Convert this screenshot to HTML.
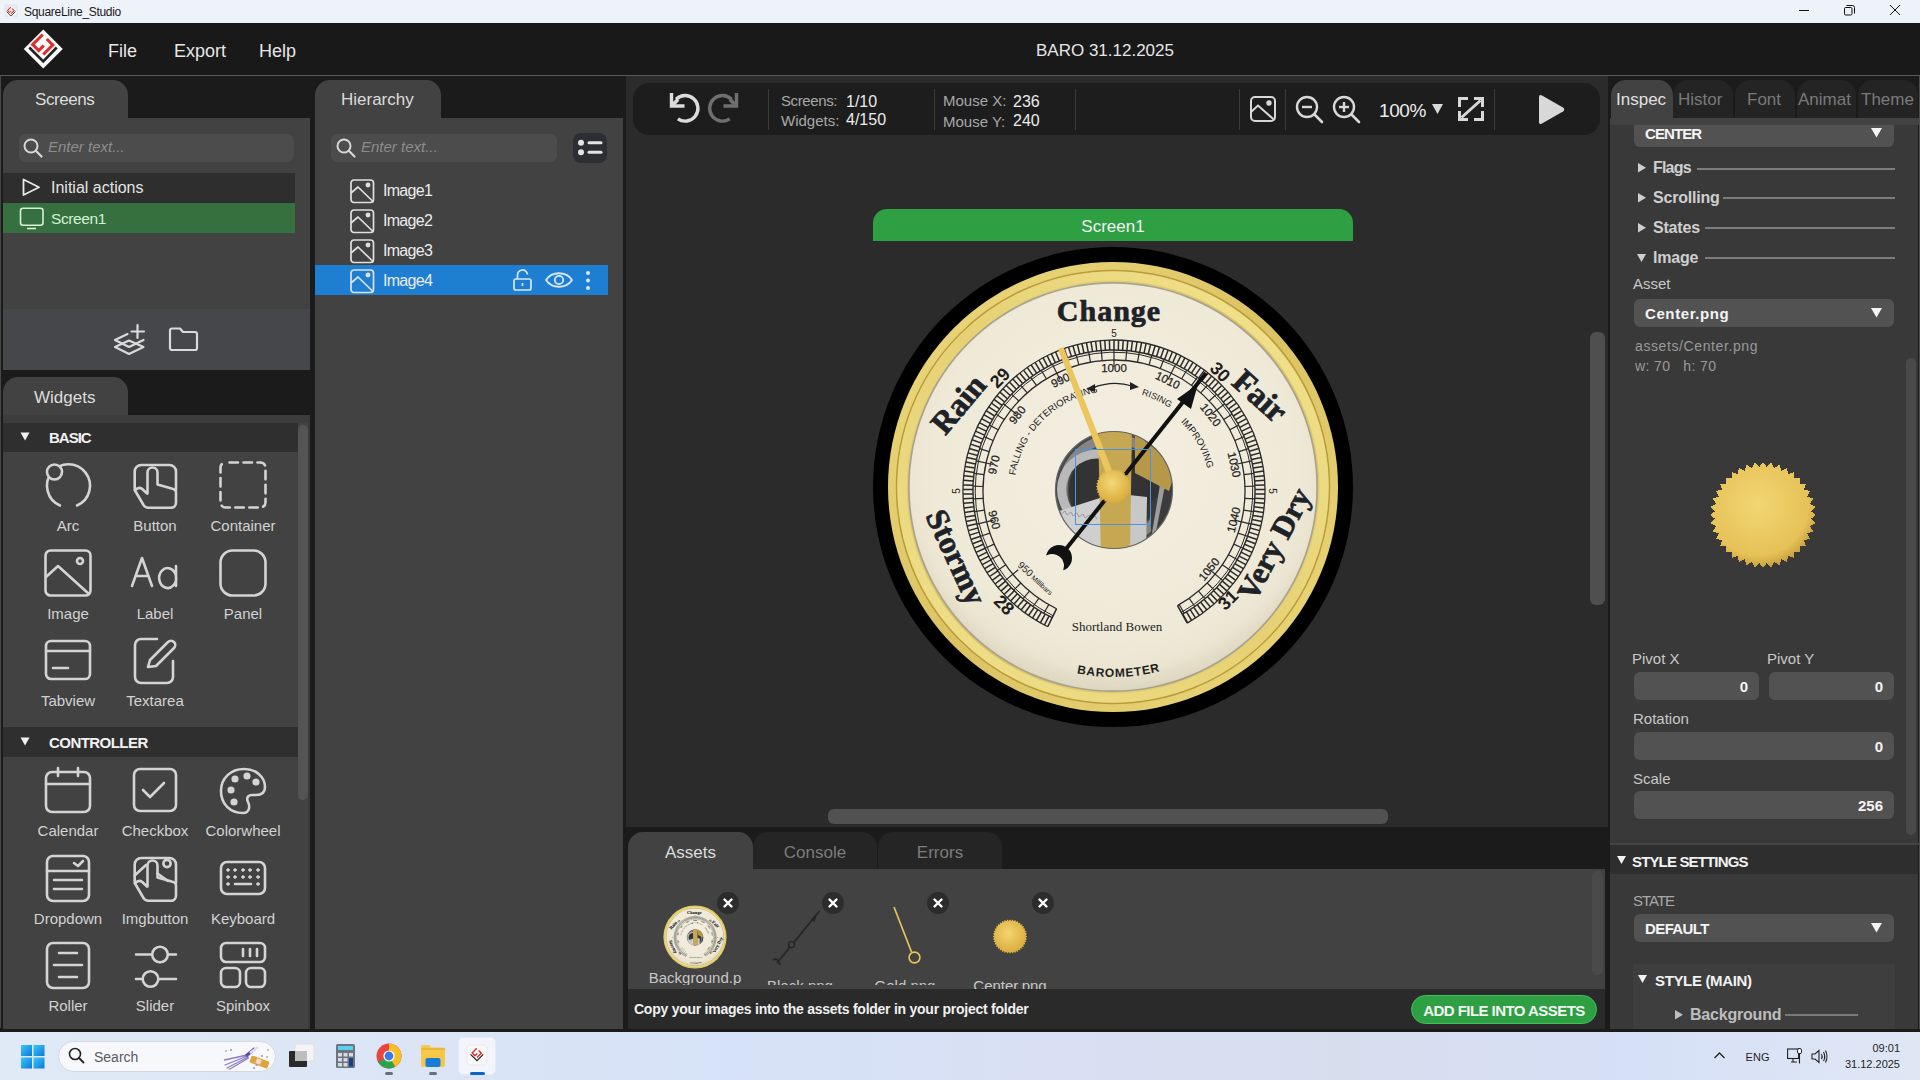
<!DOCTYPE html><html><head><meta charset="utf-8"><style>
*{margin:0;padding:0;box-sizing:border-box}
html,body{width:1920px;height:1080px;overflow:hidden;background:#1b1b1b;font-family:"Liberation Sans",sans-serif}
.ab{position:absolute}
.t{position:absolute;white-space:nowrap;line-height:1}
svg{position:absolute;overflow:visible}

</style></head><body>
<div class="ab" style="left:0px;top:0px;width:1920px;height:23px;background:#eef2f9;"></div>
<svg style="left:3px;top:3px;" width="16" height="16" viewBox="0 0 16 16"><rect x="1" y="1" width="14" height="14" rx="3" fill="#e4e8ef"/><use href="#logo" transform="translate(8,9) scale(0.33)"/></svg>
<div class="t" style="left:24px;top:5.84px;font-size:12px;color:#1a1a1a;letter-spacing:-0.3px">SquareLine_Studio</div>
<svg style="left:1799px;top:10px;" width="10" height="1" viewBox="0 0 10 1"><rect x="0" y="0" width="10" height="1" fill="#111"/></svg>
<svg style="left:1844px;top:5px;" width="11" height="11" viewBox="0 0 11 11"><rect x="0.5" y="2.5" width="7.5" height="7.5" rx="1.2" fill="none" stroke="#111" stroke-width="1"/><path d="M2.5 0.5 H8.5 A2 2 0 0 1 10.5 2.5 V8.5" fill="none" stroke="#111" stroke-width="1"/></svg>
<svg style="left:1890px;top:5px;" width="10" height="10" viewBox="0 0 10 10"><path d="M0 0 L10 10 M10 0 L0 10" stroke="#111" stroke-width="1"/></svg>
<div class="ab" style="left:0px;top:23px;width:1920px;height:52px;background:#191919;"></div>
<div class="ab" style="left:0px;top:75px;width:1920px;height:1px;background:#5a5a5a;"></div>
<svg style="left:23px;top:29px;" width="40" height="40" viewBox="0 0 40 40"><g transform="translate(20.25,20)"><g id="logo">
<path d="M0 -19.5 L19.5 0 L0 19.5 L-19.5 0 Z" fill="#fafafa"/>
<path d="M-14 -1.5 L0 12.5 L13.5 -1.5" fill="none" stroke="#222" stroke-width="2.6"/>
<path d="M-0.5 -14.5 L-10.5 -4.5 L-4.5 1.5 L0.5 -3.5" fill="none" stroke="#d92f2f" stroke-width="3.1"/>
<path d="M3.5 -10 L9.5 -4 L0 5.5" fill="none" stroke="#d92f2f" stroke-width="3.1"/>
</g></g></svg>
<div class="t" style="left:108px;top:41.76px;font-size:18px;color:#e6e6e6;">File</div>
<div class="t" style="left:174px;top:41.76px;font-size:18px;color:#e6e6e6;">Export</div>
<div class="t" style="left:259px;top:41.76px;font-size:18px;color:#e6e6e6;">Help</div>
<div class="t" style="left:1036px;top:41.61px;font-size:17px;color:#e6e6e6;">BARO 31.12.2025</div>
<div class="ab" style="left:0px;top:76px;width:1920px;height:955px;background:#1b1b1b;"></div>
<div class="ab" style="left:0px;top:76px;width:1px;height:952px;background:#474747;"></div>
<div class="ab" style="left:3px;top:80px;width:125px;height:40px;background:#424242;border-radius:15px 15px 0 0"></div>
<div class="t" style="left:35px;top:90.61px;font-size:17px;color:#dcdcdc;letter-spacing:-0.45px">Screens</div>
<div class="ab" style="left:3px;top:118px;width:307px;height:252px;background:#424242;"></div>
<div class="ab" style="left:19px;top:134px;width:275px;height:28px;background:#4c4c4c;border-radius:7px"></div>
<svg style="left:23px;top:138px;" width="24" height="24" viewBox="0 0 24 24"><circle cx="8" cy="8" r="6.5" fill="none" stroke="#d8d8d8" stroke-width="2"/><path d="M12.8 12.8 L18.5 18.5" stroke="#d8d8d8" stroke-width="2.2" stroke-linecap="round"/></svg>
<div class="t" style="left:48px;top:139.30px;font-size:15px;color:#8c8c8c;font-style:italic;">Enter text...</div>
<div class="ab" style="left:3px;top:173px;width:292px;height:30px;background:#2e2e2e;"></div>
<svg style="left:22px;top:178px;" width="20" height="20" viewBox="0 0 20 20"><path d="M1.5 1.5 L17 9.3 L1.5 17 Z" fill="none" stroke="#e8e8e8" stroke-width="1.8" stroke-linejoin="round"/></svg>
<div class="t" style="left:51px;top:180.46px;font-size:16px;color:#e4e4e4;">Initial actions</div>
<div class="ab" style="left:3px;top:203px;width:292px;height:30px;background:#37703f;"></div>
<svg style="left:19px;top:207px;" width="26" height="24" viewBox="0 0 26 24"><rect x="1.5" y="1.2" width="22.5" height="17" rx="2.5" fill="none" stroke="#d4f2d4" stroke-width="1.6"/><path d="M8 21.5 H17" stroke="#d4f2d4" stroke-width="1.6"/></svg>
<div class="t" style="left:51px;top:210.88px;font-size:15.5px;color:#d4f2d4;letter-spacing:-0.4px">Screen1</div>
<div class="ab" style="left:3px;top:309px;width:307px;height:61px;background:#46474a;"></div>
<svg style="left:112px;top:323px;" width="34" height="34" viewBox="0 0 34 34"><g fill="none" stroke="#dadada" stroke-width="2.2" stroke-linecap="round" stroke-linejoin="round">
<path d="M25.5 2 V15 M19.5 8.5 H32"/>
<path d="M15.5 11 L3 17 L17 24 L31.5 17"/>
<path d="M3 24 L17 31 L31.5 24 L17 17.5 Z"/>
</g></svg>
<svg style="left:168px;top:327px;" width="32" height="26" viewBox="0 0 32 26"><path d="M2 3 A2 2 0 0 1 4 1.5 H12 L15 5 H27 A2 2 0 0 1 29 7 V21 A2 2 0 0 1 27 23 H4 A2 2 0 0 1 2 21 Z" fill="none" stroke="#dadada" stroke-width="2.2" stroke-linejoin="round"/></svg>
<div class="ab" style="left:3px;top:377px;width:125px;height:40px;background:#424242;border-radius:15px 15px 0 0"></div>
<div class="t" style="left:34px;top:388.61px;font-size:17px;color:#dcdcdc;">Widgets</div>
<div class="ab" style="left:3px;top:415px;width:307px;height:614px;background:#424242;"></div>
<div class="ab" style="left:3px;top:415px;width:307px;height:8px;background:#3d3d3d;"></div>
<div class="ab" style="left:3px;top:423px;width:295px;height:29px;background:#2f2f2f;"></div>
<svg style="left:20px;top:432px;" width="10" height="9" viewBox="0 0 10 9"><path d="M0.5 0.5 H9.5 L5 8.5 Z" fill="#f0f0f0"/></svg>
<div class="t" style="left:49px;top:430.30px;font-size:15px;color:#f2f2f2;font-weight:bold;letter-spacing:-1px">BASIC</div>
<div class="ab" style="left:3px;top:727px;width:295px;height:30px;background:#2f2f2f;"></div>
<svg style="left:20px;top:737px;" width="10" height="9" viewBox="0 0 10 9"><path d="M0.5 0.5 H9.5 L5 8.5 Z" fill="#f0f0f0"/></svg>
<div class="t" style="left:49px;top:735.30px;font-size:15px;color:#f2f2f2;font-weight:bold;letter-spacing:-0.55px">CONTROLLER</div>
<div class="ab" style="left:298px;top:425px;width:10px;height:375px;background:#545454;border-radius:5px"></div>
<div class="ab" style="left:308px;top:415px;width:2px;height:614px;background:#3a3a3a;"></div>
<div class="t" style="left:8px;top:518.30px;font-size:15px;color:#d2d2d2;width:120px;text-align:center;">Arc</div>
<div class="t" style="left:95px;top:518.30px;font-size:15px;color:#d2d2d2;width:120px;text-align:center;">Button</div>
<div class="t" style="left:183px;top:518.30px;font-size:15px;color:#d2d2d2;width:120px;text-align:center;">Container</div>
<div class="t" style="left:8px;top:606.30px;font-size:15px;color:#d2d2d2;width:120px;text-align:center;">Image</div>
<div class="t" style="left:95px;top:606.30px;font-size:15px;color:#d2d2d2;width:120px;text-align:center;">Label</div>
<div class="t" style="left:183px;top:606.30px;font-size:15px;color:#d2d2d2;width:120px;text-align:center;">Panel</div>
<div class="t" style="left:8px;top:693.30px;font-size:15px;color:#d2d2d2;width:120px;text-align:center;">Tabview</div>
<div class="t" style="left:95px;top:693.30px;font-size:15px;color:#d2d2d2;width:120px;text-align:center;">Textarea</div>
<div class="t" style="left:8px;top:823.30px;font-size:15px;color:#d2d2d2;width:120px;text-align:center;">Calendar</div>
<div class="t" style="left:95px;top:823.30px;font-size:15px;color:#d2d2d2;width:120px;text-align:center;">Checkbox</div>
<div class="t" style="left:183px;top:823.30px;font-size:15px;color:#d2d2d2;width:120px;text-align:center;">Colorwheel</div>
<div class="t" style="left:8px;top:911.30px;font-size:15px;color:#d2d2d2;width:120px;text-align:center;">Dropdown</div>
<div class="t" style="left:95px;top:911.30px;font-size:15px;color:#d2d2d2;width:120px;text-align:center;">Imgbutton</div>
<div class="t" style="left:183px;top:911.30px;font-size:15px;color:#d2d2d2;width:120px;text-align:center;">Keyboard</div>
<div class="t" style="left:8px;top:998.30px;font-size:15px;color:#d2d2d2;width:120px;text-align:center;">Roller</div>
<div class="t" style="left:95px;top:998.30px;font-size:15px;color:#d2d2d2;width:120px;text-align:center;">Slider</div>
<div class="t" style="left:183px;top:998.30px;font-size:15px;color:#d2d2d2;width:120px;text-align:center;">Spinbox</div>
<svg style="left:44px;top:461px;" width="48" height="48" viewBox="0 0 48 48"><g fill="none" stroke="#d4d4d4" stroke-width="2.6" stroke-linecap="round" stroke-linejoin="round"><path d="M16 44.5 A21.5 21.5 0 1 1 33 44.5"/><circle cx="10.5" cy="11" r="7.5" fill="#424242"/></g></svg>
<svg style="left:131px;top:461px;" width="48" height="48" viewBox="0 0 48 48"><g fill="none" stroke="#d4d4d4" stroke-width="2.6" stroke-linecap="round" stroke-linejoin="round"><path d="M3.7 29 V10.5 A6.5 6.5 0 0 1 10.2 4 H38.5 A6.5 6.5 0 0 1 45 10.5 V29"/><path d="M16 32.5 L11 27.8 Q7.5 25.5 4 29.5 L12.5 44 Q14 46.8 17.5 46.8 H40 A5 5 0 0 0 45 41.8 V31.5 Q45 28.5 41.5 27.8 L26.5 23.5 V11.5 A5 5 0 0 0 16.5 11.5 V32.5"/></g></svg>
<svg style="left:219px;top:461px;" width="48" height="48" viewBox="0 0 48 48"><g fill="none" stroke="#d4d4d4" stroke-width="2.6" stroke-linecap="round" stroke-linejoin="round"><rect x="1.5" y="1.5" width="45" height="45" rx="5" stroke-dasharray="8.5 5.5" stroke-dashoffset="-4"/></g></svg>
<svg style="left:44px;top:549px;" width="48" height="48" viewBox="0 0 48 48"><g fill="none" stroke="#d4d4d4" stroke-width="2.6" stroke-linecap="round" stroke-linejoin="round"><rect x="1.5" y="1.5" width="45" height="45" rx="5"/><path d="M2 28 L14 17 L45 45"/><circle cx="36" cy="12" r="3"/></g></svg>
<svg style="left:131px;top:549px;" width="48" height="48" viewBox="0 0 48 48"><g fill="none" stroke="#d4d4d4" stroke-width="2.6" stroke-linecap="round" stroke-linejoin="round"><path d="M1 37 L11 9 L21 37 M5 27 H17"/><path d="M45 17 V37 M45 27 A8.5 10 0 1 1 44.9 26.5"/></g></svg>
<svg style="left:219px;top:549px;" width="48" height="48" viewBox="0 0 48 48"><g fill="none" stroke="#d4d4d4" stroke-width="2.6" stroke-linecap="round" stroke-linejoin="round"><rect x="1.5" y="1.5" width="45" height="45" rx="12"/></g></svg>
<svg style="left:44px;top:636px;" width="48" height="48" viewBox="0 0 48 48"><g fill="none" stroke="#d4d4d4" stroke-width="2.6" stroke-linecap="round" stroke-linejoin="round"><rect x="2" y="5" width="44" height="38" rx="5"/><path d="M2 15 H46 M9 32 H24"/></g></svg>
<svg style="left:131px;top:636px;" width="48" height="48" viewBox="0 0 48 48"><g fill="none" stroke="#d4d4d4" stroke-width="2.6" stroke-linecap="round" stroke-linejoin="round"><path d="M26 3 H10 A6 6 0 0 0 4 9 V41 A6 6 0 0 0 10 47 H36 A6 6 0 0 0 42 41 V25"/><path d="M17 31 L19 24 L37 6 A4 4 0 0 1 43 12 L25 30 Z"/></g></svg>
<svg style="left:44px;top:767px;" width="48" height="48" viewBox="0 0 48 48"><g fill="none" stroke="#d4d4d4" stroke-width="2.6" stroke-linecap="round" stroke-linejoin="round"><rect x="2" y="5" width="44" height="40" rx="6"/><path d="M2 17 H46 M14 1 V9 M34 1 V9"/></g></svg>
<svg style="left:131px;top:767px;" width="48" height="48" viewBox="0 0 48 48"><g fill="none" stroke="#d4d4d4" stroke-width="2.6" stroke-linecap="round" stroke-linejoin="round"><rect x="3" y="2" width="42" height="42" rx="6"/><path d="M12 23 L19 30 L33 16"/></g></svg>
<svg style="left:219px;top:767px;" width="48" height="48" viewBox="0 0 48 48"><g fill="none" stroke="#d4d4d4" stroke-width="2.6" stroke-linecap="round" stroke-linejoin="round"><path d="M24 46 C11 46 2 37 2 24 C2 11 12 2 25 2 C37 2 46 10 46 20 C46 26 42 28 37 28 H33 C29 28 27 31 29 35 C31 39 31 46 24 46 Z"/><circle cx="12" cy="23" r="2.3" fill="#d4d4d4"/><circle cx="16" cy="12" r="2.3" fill="#d4d4d4"/><circle cx="28" cy="9" r="2.3" fill="#d4d4d4"/><circle cx="37" cy="15" r="2.3" fill="#d4d4d4"/><circle cx="15" cy="35" r="2.3" fill="#d4d4d4"/></g></svg>
<svg style="left:44px;top:854px;" width="48" height="48" viewBox="0 0 48 48"><g fill="none" stroke="#d4d4d4" stroke-width="2.6" stroke-linecap="round" stroke-linejoin="round"><rect x="3" y="2" width="42" height="45" rx="6"/><path d="M3 17 H45 M30 9 L34 12 L39 7 M10 26 H38 M10 35 H38"/></g></svg>
<svg style="left:131px;top:854px;" width="48" height="48" viewBox="0 0 48 48"><g fill="none" stroke="#d4d4d4" stroke-width="2.6" stroke-linecap="round" stroke-linejoin="round"><path d="M3.7 29 V10.5 A6.5 6.5 0 0 1 10.2 4 H38.5 A6.5 6.5 0 0 1 45 10.5 V29"/><path d="M16 32.5 L11 27.8 Q7.5 25.5 4 29.5 L12.5 44 Q14 46.8 17.5 46.8 H40 A5 5 0 0 0 45 41.8 V31.5 Q45 28.5 41.5 27.8 L26.5 23.5 V11.5 A5 5 0 0 0 16.5 11.5 V32.5"/><path d="M3.7 21.5 L15 11 M26.5 19.5 L37 27"/><circle cx="36" cy="9.5" r="3.6"/></g></svg>
<svg style="left:219px;top:854px;" width="48" height="48" viewBox="0 0 48 48"><g fill="none" stroke="#d4d4d4" stroke-width="2.6" stroke-linecap="round" stroke-linejoin="round"><rect x="2" y="8" width="44" height="32" rx="6"/><circle cx="9" cy="16" r="1.3" fill="#d4d4d4" stroke-width="1"/><circle cx="16" cy="16" r="1.3" fill="#d4d4d4" stroke-width="1"/><circle cx="24" cy="16" r="1.3" fill="#d4d4d4" stroke-width="1"/><circle cx="31" cy="16" r="1.3" fill="#d4d4d4" stroke-width="1"/><circle cx="39" cy="16" r="1.3" fill="#d4d4d4" stroke-width="1"/><circle cx="9" cy="23" r="1.3" fill="#d4d4d4" stroke-width="1"/><circle cx="16" cy="23" r="1.3" fill="#d4d4d4" stroke-width="1"/><circle cx="24" cy="23" r="1.3" fill="#d4d4d4" stroke-width="1"/><circle cx="31" cy="23" r="1.3" fill="#d4d4d4" stroke-width="1"/><circle cx="39" cy="23" r="1.3" fill="#d4d4d4" stroke-width="1"/><circle cx="9" cy="30" r="1.3" fill="#d4d4d4" stroke-width="1"/><circle cx="39" cy="30" r="1.3" fill="#d4d4d4" stroke-width="1"/><path d="M16 30 H32"/></g></svg>
<svg style="left:44px;top:941px;" width="48" height="48" viewBox="0 0 48 48"><g fill="none" stroke="#d4d4d4" stroke-width="2.6" stroke-linecap="round" stroke-linejoin="round"><rect x="3" y="2" width="42" height="45" rx="6"/><path d="M15 12 H33 M10 24 H38 M15 36 H33"/></g></svg>
<svg style="left:131px;top:941px;" width="48" height="48" viewBox="0 0 48 48"><g fill="none" stroke="#d4d4d4" stroke-width="2.6" stroke-linecap="round" stroke-linejoin="round"><path d="M5 13.5 H21 M37 13.5 H45 M5 38 H11.5 M27.5 38 H45"/><circle cx="29" cy="13.5" r="7.8"/><circle cx="19.5" cy="38" r="7.8"/></g></svg>
<svg style="left:219px;top:941px;" width="48" height="48" viewBox="0 0 48 48"><g fill="none" stroke="#d4d4d4" stroke-width="2.6" stroke-linecap="round" stroke-linejoin="round"><rect x="2" y="2" width="44" height="19" rx="5"/><rect x="2" y="27" width="19" height="19" rx="5"/><rect x="27" y="27" width="19" height="19" rx="5"/><path d="M24 8 V15 M31 8 V15 M38 8 V15"/></g></svg>
<div class="ab" style="left:315px;top:80px;width:126px;height:40px;background:#424242;border-radius:15px 15px 0 0"></div>
<div class="t" style="left:341px;top:90.61px;font-size:17px;color:#dcdcdc;">Hierarchy</div>
<div class="ab" style="left:315px;top:118px;width:308px;height:911px;background:#424242;"></div>
<div class="ab" style="left:331px;top:134px;width:226px;height:28px;background:#4c4c4c;border-radius:7px"></div>
<svg style="left:336px;top:138px;" width="24" height="24" viewBox="0 0 24 24"><circle cx="8" cy="8" r="6.5" fill="none" stroke="#d8d8d8" stroke-width="2"/><path d="M12.8 12.8 L18.5 18.5" stroke="#d8d8d8" stroke-width="2.2" stroke-linecap="round"/></svg>
<div class="t" style="left:361px;top:139.30px;font-size:15px;color:#8c8c8c;font-style:italic;">Enter text...</div>
<div class="ab" style="left:573px;top:133px;width:34px;height:30px;background:#2d2e33;border-radius:8px"></div>
<svg style="left:573px;top:133px;" width="34" height="30" viewBox="0 0 34 30"><g fill="#e4e4e4"><circle cx="8" cy="9.7" r="3"/><circle cx="8" cy="19.3" r="3"/><rect x="14.5" y="8.2" width="15" height="3" rx="1.5"/><rect x="14.5" y="17.8" width="15" height="3" rx="1.5"/></g></svg>
<div class="ab" style="left:315px;top:265px;width:293px;height:30px;background:#1e7fd2;"></div>
<svg style="left:350px;top:179px;" width="24" height="24" viewBox="0 0 24 24"><g fill="none" stroke="#e0e0e0" stroke-width="1.7" stroke-linejoin="round"><rect x="1" y="1" width="22.5" height="22.5" rx="3"/><path d="M1 14 L8 8 L23 22.5"/><circle cx="18" cy="6" r="1.6" fill="#e0e0e0"/></g></svg>
<div class="t" style="left:383px;top:183.46px;font-size:16px;color:#ececec;letter-spacing:-0.7px">Image1</div>
<svg style="left:350px;top:209px;" width="24" height="24" viewBox="0 0 24 24"><g fill="none" stroke="#e0e0e0" stroke-width="1.7" stroke-linejoin="round"><rect x="1" y="1" width="22.5" height="22.5" rx="3"/><path d="M1 14 L8 8 L23 22.5"/><circle cx="18" cy="6" r="1.6" fill="#e0e0e0"/></g></svg>
<div class="t" style="left:383px;top:213.46px;font-size:16px;color:#ececec;letter-spacing:-0.7px">Image2</div>
<svg style="left:350px;top:239px;" width="24" height="24" viewBox="0 0 24 24"><g fill="none" stroke="#e0e0e0" stroke-width="1.7" stroke-linejoin="round"><rect x="1" y="1" width="22.5" height="22.5" rx="3"/><path d="M1 14 L8 8 L23 22.5"/><circle cx="18" cy="6" r="1.6" fill="#e0e0e0"/></g></svg>
<div class="t" style="left:383px;top:243.46px;font-size:16px;color:#ececec;letter-spacing:-0.7px">Image3</div>
<svg style="left:350px;top:269px;" width="24" height="24" viewBox="0 0 24 24"><g fill="none" stroke="#e0e0e0" stroke-width="1.7" stroke-linejoin="round"><rect x="1" y="1" width="22.5" height="22.5" rx="3"/><path d="M1 14 L8 8 L23 22.5"/><circle cx="18" cy="6" r="1.6" fill="#e0e0e0"/></g></svg>
<div class="t" style="left:383px;top:273.46px;font-size:16px;color:#ececec;letter-spacing:-0.7px">Image4</div>
<svg style="left:513px;top:270px;" width="20" height="21" viewBox="0 0 20 21"><g fill="none" stroke="#d8e8f8" stroke-width="1.7"><rect x="1" y="9" width="17" height="11" rx="2"/><path d="M4.5 9 V5.5 A5 5 0 0 1 14.5 4.5"/><path d="M9.5 13 V16"/></g></svg>
<svg style="left:545px;top:271px;" width="28" height="18" viewBox="0 0 28 18"><g fill="none" stroke="#d8e8f8" stroke-width="1.8"><path d="M1 9 C7 0 21 0 27 9 C21 18 7 18 1 9 Z"/><circle cx="14" cy="9" r="4.2"/></g></svg>
<svg style="left:584px;top:270px;" width="8" height="22" viewBox="0 0 8 22"><g fill="#d8e8f8"><circle cx="4" cy="3" r="2"/><circle cx="4" cy="10.5" r="2"/><circle cx="4" cy="18" r="2"/></g></svg>
<div class="ab" style="left:623px;top:76px;width:3px;height:952px;background:#1b1b1b;"></div>
<div class="ab" style="left:626px;top:76px;width:982px;height:751px;background:#2b2b2b;"></div>
<div class="ab" style="left:1608px;top:76px;width:2px;height:952px;background:#1b1b1b;"></div>
<div class="ab" style="left:633px;top:83px;width:967px;height:52px;background:#1d1d1d;border-radius:16px"></div>
<div class="ab" style="left:768px;top:89px;width:1px;height:41px;background:#3c3c3c;"></div>
<div class="ab" style="left:934px;top:89px;width:1px;height:41px;background:#3c3c3c;"></div>
<div class="ab" style="left:1075px;top:89px;width:1px;height:41px;background:#3c3c3c;"></div>
<div class="ab" style="left:1239px;top:89px;width:1px;height:41px;background:#3c3c3c;"></div>
<div class="ab" style="left:1285px;top:89px;width:1px;height:41px;background:#3c3c3c;"></div>
<div class="ab" style="left:1494px;top:89px;width:1px;height:41px;background:#3c3c3c;"></div>
<svg style="left:668px;top:91px;" width="34" height="34" viewBox="0 0 34 34"><g fill="none" stroke="#dcdcdc" stroke-width="3.4"><path d="M8.1 8.3 A12.8 12.8 0 1 1 9.9 27.9"/><path d="M3.5 2 V15 H16.5" stroke-linejoin="miter"/><path d="M4 14.5 L10 8.5" stroke-width="3.8"/></g></svg>
<svg style="left:706px;top:91px;" width="34" height="34" viewBox="0 0 34 34"><g fill="none" stroke="#6f6f6f" stroke-width="3.4"><path d="M25.5 8.3 A12.8 12.8 0 1 0 23.7 27.9"/><path d="M30.5 2 V15 H17.5" stroke-linejoin="miter"/><path d="M30 14.5 L24 8.5" stroke-width="3.8"/></g></svg>
<div class="t" style="left:781px;top:92.80px;font-size:15px;color:#a8a8a8;letter-spacing:-0.4px">Screens:</div>
<div class="t" style="left:781px;top:113.10px;font-size:15px;color:#a8a8a8;">Widgets:</div>
<div class="t" style="left:846px;top:93.96px;font-size:16px;color:#ececec;">1/10</div>
<div class="t" style="left:846px;top:112.46px;font-size:16px;color:#ececec;">4/150</div>
<div class="t" style="left:943px;top:92.90px;font-size:15px;color:#a8a8a8;">Mouse X:</div>
<div class="t" style="left:943px;top:113.60px;font-size:15px;color:#a8a8a8;">Mouse Y:</div>
<div class="t" style="left:1013px;top:93.96px;font-size:16px;color:#ececec;">236</div>
<div class="t" style="left:1013px;top:112.76px;font-size:16px;color:#ececec;">240</div>
<svg style="left:1250px;top:96px;" width="26" height="26" viewBox="0 0 26 26"><g fill="none" stroke="#d8d8d8" stroke-width="2"><rect x="1" y="1" width="24" height="24" rx="4"/><path d="M1 16 L8 9.5 L24.5 24"/><circle cx="19" cy="7" r="1.7" fill="#d8d8d8"/></g></svg>
<svg style="left:1295px;top:95px;" width="30" height="30" viewBox="0 0 30 30"><circle cx="12" cy="12" r="10" fill="none" stroke="#d8d8d8" stroke-width="2.4"/><path d="M19.5 19.5 L27 27" stroke="#d8d8d8" stroke-width="2.6" stroke-linecap="round"/><path d="M7 12 H17" stroke="#d8d8d8" stroke-width="2.4"/></svg>
<svg style="left:1332px;top:95px;" width="30" height="30" viewBox="0 0 30 30"><circle cx="12" cy="12" r="10" fill="none" stroke="#d8d8d8" stroke-width="2.4"/><path d="M19.5 19.5 L27 27" stroke="#d8d8d8" stroke-width="2.6" stroke-linecap="round"/><path d="M7 12 H17" stroke="#d8d8d8" stroke-width="2.4"/><path d="M12 7 V17" stroke="#d8d8d8" stroke-width="2.4"/></svg>
<div class="t" style="left:1379px;top:100.92px;font-size:19px;color:#ececec;letter-spacing:-0.4px">100%</div>
<svg style="left:1432px;top:104px;" width="12" height="11" viewBox="0 0 12 11"><path d="M0 0 H11 L5.5 10 Z" fill="#d8d8d8"/></svg>
<svg style="left:1457px;top:96px;" width="28" height="26" viewBox="0 0 28 26"><g fill="none" stroke="#d8d8d8" stroke-width="3"><path d="M2.5 11 V2.5 H11 M17 2.5 H25.5 V11 M2.5 15 V23.5 H11 M17 23.5 H25.5 V15 M4.5 21.5 L23.5 4.5"/></g></svg>
<svg style="left:1537px;top:94px;" width="28" height="31" viewBox="0 0 28 31"><path d="M2 3 Q2 0 5 1.5 L26 13.5 Q28.5 15.5 26 17.5 L5 29.5 Q2 31 2 28 Z" fill="#d8d8d8"/></svg>
<div class="ab" style="left:873px;top:209px;width:480px;height:32px;background:#2ea043;border-radius:14px 14px 0 0"></div>
<div class="t" style="left:873px;top:217.91px;font-size:17px;color:#f2f2f2;width:480px;text-align:center;">Screen1</div>
<div class="ab" style="left:828px;top:809px;width:560px;height:15px;background:#515151;border-radius:6px"></div>
<div class="ab" style="left:1590px;top:332px;width:15px;height:273px;background:#4f4f4f;border-radius:6px"></div>
<svg style="left:873px;top:247px;" width="480" height="480" viewBox="0 0 480 480"><defs>
<radialGradient id="face" cx="50%" cy="44%" r="56%"><stop offset="0" stop-color="#f3efe1"/><stop offset="0.78" stop-color="#efe9d7"/><stop offset="0.9" stop-color="#ebe5d2"/><stop offset="1" stop-color="#ddd6bf"/></radialGradient>
<linearGradient id="gold1" x1="0" y1="0" x2="1" y2="1"><stop offset="0" stop-color="#eddb7e"/><stop offset="0.5" stop-color="#dbc262"/><stop offset="1" stop-color="#ebd87b"/></linearGradient>
<linearGradient id="gold2" x1="1" y1="0" x2="0" y2="1"><stop offset="0" stop-color="#f3e590"/><stop offset="0.5" stop-color="#e6d073"/><stop offset="1" stop-color="#f1e28c"/></linearGradient>
<radialGradient id="mech" cx="50%" cy="50%" r="50%"><stop offset="0" stop-color="#6a6a6a"/><stop offset="0.7" stop-color="#8a8a8a"/><stop offset="1" stop-color="#4a4a4a"/></radialGradient>
<radialGradient id="gear" cx="45%" cy="40%" r="60%"><stop offset="0" stop-color="#f5d877"/><stop offset="1" stop-color="#d7a93a"/></radialGradient>
</defs><circle cx="240" cy="240" r="240" fill="#000"/><g id="baro"><circle cx="240" cy="240" r="225" fill="url(#gold1)"/><circle cx="240" cy="240" r="216.5" fill="none" stroke="#b99b3c" stroke-width="1.5"/><circle cx="240" cy="240" r="211" fill="none" stroke="url(#gold2)" stroke-width="9"/><circle cx="240" cy="240" r="205" fill="#a8a290"/><circle cx="240" cy="240" r="203.3" fill="url(#face)"/><path d="M174.81 379.72 A151 151 0 1 1 314.21 376.07" stroke="#2a2a2a" fill="none" stroke-width="1.3"/><path d="M179.19 370.73 A141 141 0 1 1 309.36 367.32" stroke="#2a2a2a" fill="none" stroke-width="1.4"/><path d="M180.15 368.75 A138.8 138.8 0 1 1 308.29 365.40" stroke="#2a2a2a" fill="none" stroke-width="1.0"/><path d="M183.57 361.74 A131 131 0 1 1 304.51 358.58" stroke="#2a2a2a" fill="none" stroke-width="1.3"/><path d="M183.6 361.7 L174.8 379.7 M304.5 358.6 L314.2 376.1 M176.0 369.1 L171.4 378.0 M172.2 367.1 L167.3 375.8 M168.5 364.9 L163.3 373.5 M164.8 362.6 L159.4 371.1 M161.2 360.3 L155.6 368.5 M157.7 357.8 L151.8 365.8 M154.3 355.2 L148.1 363.0 M150.9 352.5 L144.5 360.1 M147.6 349.6 L141.0 357.1 M144.4 346.7 L137.6 354.0 M141.3 343.7 L134.3 350.8 M138.3 340.6 L131.0 347.5 M135.4 337.4 L127.9 344.1 M132.6 334.2 L124.9 340.6 M129.9 330.8 L122.0 337.0 M127.3 327.4 L119.2 333.3 M124.8 323.9 L116.6 329.5 M122.4 320.3 L114.0 325.7 M120.1 316.6 L111.6 321.7 M118.0 312.9 L109.2 317.7 M115.9 309.1 L107.0 313.7 M114.0 305.2 L105.0 309.6 M112.2 301.3 L103.0 305.4 M110.5 297.3 L101.2 301.1 M108.9 293.3 L99.5 296.8 M107.5 289.2 L98.0 292.5 M106.1 285.1 L96.6 288.1 M104.9 281.0 L95.3 283.6 M103.9 276.8 L94.1 279.1 M102.9 272.6 L93.1 274.6 M102.1 268.4 L92.3 270.1 M101.4 264.1 L91.5 265.5 M100.9 259.8 L91.0 260.9 M100.5 255.5 L90.5 256.3 M100.2 251.2 L90.2 251.7 M100.0 246.9 L90.0 247.1 M100.0 242.6 L90.0 242.5 M100.1 238.3 L90.1 237.9 M100.4 234.0 L90.4 233.3 M100.7 229.7 L90.8 228.7 M101.2 225.4 L91.3 224.1 M101.9 221.1 L92.0 219.5 M102.6 216.9 L92.8 214.9 M103.5 212.6 L93.8 210.4 M104.6 208.5 L94.9 205.9 M105.7 204.3 L96.1 201.5 M107.0 200.2 L97.5 197.1 M108.4 196.1 L99.0 192.7 M109.9 192.1 L100.6 188.4 M111.6 188.1 L102.4 184.1 M113.3 184.1 L104.3 179.9 M115.2 180.3 L106.3 175.7 M117.2 176.4 L108.5 171.7 M119.4 172.7 L110.7 167.6 M121.6 169.0 L113.1 163.7 M124.0 165.4 L115.7 159.8 M126.4 161.8 L118.3 156.0 M129.0 158.4 L121.0 152.3 M131.7 155.0 L123.9 148.7 M134.4 151.7 L126.9 145.1 M137.3 148.5 L129.9 141.7 M140.3 145.3 L133.1 138.3 M143.3 142.3 L136.4 135.1 M146.5 139.4 L139.8 131.9 M149.7 136.5 L143.3 128.9 M153.1 133.8 L146.8 126.0 M156.5 131.1 L150.5 123.1 M160.0 128.6 L154.2 120.4 M163.6 126.2 L158.1 117.8 M167.2 123.9 L162.0 115.3 M170.9 121.7 L165.9 113.0 M174.7 119.6 L170.0 110.7 M178.5 117.6 L174.1 108.6 M182.4 115.7 L178.3 106.6 M186.4 114.0 L182.5 104.8 M190.4 112.4 L186.8 103.1 M194.4 110.9 L191.1 101.5 M198.5 109.6 L195.5 100.0 M202.7 108.3 L199.9 98.7 M206.8 107.2 L204.4 97.5 M211.0 106.2 L208.9 96.5 M215.3 105.4 L213.4 95.5 M219.5 104.6 L218.0 94.8 M223.8 104.1 L222.6 94.1 M228.1 103.6 L227.2 93.6 M232.4 103.3 L231.8 93.3 M236.7 103.1 L236.4 93.1 M241.0 103.0 L241.0 93.0 M245.3 103.1 L245.6 93.1 M249.6 103.3 L250.2 93.3 M253.9 103.6 L254.8 93.6 M258.2 104.1 L259.4 94.1 M262.5 104.6 L264.0 94.8 M266.7 105.4 L268.6 95.5 M271.0 106.2 L273.1 96.5 M275.2 107.2 L277.6 97.5 M279.3 108.3 L282.1 98.7 M283.5 109.6 L286.5 100.0 M287.6 110.9 L290.9 101.5 M291.6 112.4 L295.2 103.1 M295.6 114.0 L299.5 104.8 M299.6 115.7 L303.7 106.6 M303.5 117.6 L307.9 108.6 M307.3 119.6 L312.0 110.7 M311.1 121.7 L316.1 113.0 M314.8 123.9 L320.0 115.3 M318.4 126.2 L323.9 117.8 M322.0 128.6 L327.8 120.4 M325.5 131.1 L331.5 123.1 M328.9 133.8 L335.2 126.0 M332.3 136.5 L338.7 128.9 M335.5 139.4 L342.2 131.9 M338.7 142.3 L345.6 135.1 M341.7 145.3 L348.9 138.3 M344.7 148.5 L352.1 141.7 M347.6 151.7 L355.1 145.1 M350.3 155.0 L358.1 148.7 M353.0 158.4 L361.0 152.3 M355.6 161.8 L363.7 156.0 M358.0 165.4 L366.3 159.8 M360.4 169.0 L368.9 163.7 M362.6 172.7 L371.3 167.6 M364.8 176.4 L373.5 171.7 M366.8 180.3 L375.7 175.7 M368.7 184.1 L377.7 179.9 M370.4 188.1 L379.6 184.1 M372.1 192.1 L381.4 188.4 M373.6 196.1 L383.0 192.7 M375.0 200.2 L384.5 197.1 M376.3 204.3 L385.9 201.5 M377.4 208.5 L387.1 205.9 M378.5 212.6 L388.2 210.4 M379.4 216.9 L389.2 214.9 M380.1 221.1 L390.0 219.5 M380.8 225.4 L390.7 224.1 M381.3 229.7 L391.2 228.7 M381.6 234.0 L391.6 233.3 M381.9 238.3 L391.9 237.9 M382.0 242.6 L392.0 242.5 M382.0 246.9 L392.0 247.1 M381.8 251.2 L391.8 251.7 M381.5 255.5 L391.5 256.3 M381.1 259.8 L391.0 260.9 M380.6 264.1 L390.5 265.5 M379.9 268.4 L389.7 270.1 M379.1 272.6 L388.9 274.6 M378.1 276.8 L387.9 279.1 M377.1 281.0 L386.7 283.6 M375.9 285.1 L385.4 288.1 M374.5 289.2 L384.0 292.5 M373.1 293.3 L382.5 296.8 M371.5 297.3 L380.8 301.1 M369.8 301.3 L379.0 305.4 M368.0 305.2 L377.0 309.6 M366.1 309.1 L375.0 313.7 M364.0 312.9 L372.8 317.7 M361.9 316.6 L370.4 321.7 M359.6 320.3 L368.0 325.7 M357.2 323.9 L365.4 329.5 M354.7 327.4 L362.8 333.3 M352.1 330.8 L360.0 337.0 M349.4 334.2 L357.1 340.6 M346.6 337.4 L354.1 344.1 M343.7 340.6 L351.0 347.5 M340.7 343.7 L347.7 350.8 M337.6 346.7 L344.4 354.0 M334.4 349.6 L341.0 357.1 M331.1 352.5 L337.5 360.1 M327.7 355.2 L333.9 363.0 M324.3 357.8 L330.2 365.8 M320.8 360.3 L326.4 368.5 M317.2 362.6 L322.6 371.1 M313.5 364.9 L318.7 373.5 M309.8 367.1 L314.7 375.8" stroke="#2a2a2a" stroke-width="1.5" fill="none"/><path d="M175.8 357.6 L170.8 366.3 M165.8 351.3 L160.1 359.5 M156.5 344.1 L150.0 351.7 M147.8 336.0 L140.7 343.1 M145.2 322.8 L132.1 333.6 M132.7 317.8 L124.5 323.4 M126.5 307.7 L117.8 312.6 M121.2 297.1 L112.1 301.2 M116.9 286.1 L107.5 289.3 M120.5 273.1 L103.9 277.1 M111.4 263.1 L101.5 264.6 M110.2 251.3 L100.2 251.9 M110.1 239.5 L100.1 239.1 M111.0 227.7 L101.1 226.4 M119.9 217.5 L103.3 213.9 M116.1 204.6 L106.5 201.6 M120.1 193.5 L110.9 189.6 M125.2 182.8 L116.3 178.1 M131.2 172.6 L122.8 167.1 M143.6 167.3 L130.2 156.8 M145.8 154.0 L138.5 147.1 M154.3 145.8 L147.7 138.3 M163.5 138.4 L157.6 130.3 M173.4 131.8 L168.2 123.2 M186.9 132.4 L179.4 117.2 M194.7 121.5 L191.1 112.1 M205.9 117.8 L203.2 108.2 M217.5 115.1 L215.7 105.3 M229.2 113.5 L228.3 103.6 M241.0 120.0 L241.0 103.0 M252.8 113.5 L253.7 103.6 M264.5 115.1 L266.3 105.3 M276.1 117.8 L278.8 108.2 M287.3 121.5 L290.9 112.1 M295.1 132.4 L302.6 117.2 M308.6 131.8 L313.8 123.2 M318.5 138.4 L324.4 130.3 M327.7 145.8 L334.3 138.3 M336.2 154.0 L343.5 147.1 M338.4 167.3 L351.8 156.8 M350.8 172.6 L359.2 167.1 M356.8 182.8 L365.7 178.1 M361.9 193.5 L371.1 189.6 M365.9 204.6 L375.5 201.6 M362.1 217.5 L378.7 213.9 M371.0 227.7 L380.9 226.4 M371.9 239.5 L381.9 239.1 M371.8 251.3 L381.8 251.9 M370.6 263.1 L380.5 264.6 M361.5 273.1 L378.1 277.1 M365.1 286.1 L374.5 289.3 M360.8 297.1 L369.9 301.2 M355.5 307.7 L364.2 312.6 M349.3 317.8 L357.5 323.4 M336.8 322.8 L349.9 333.6 M334.2 336.0 L341.3 343.1 M325.5 344.1 L332.0 351.7 M316.2 351.3 L321.9 359.5 M306.2 357.6 L311.2 366.3" stroke="#2a2a2a" stroke-width="1.2" fill="none"/><text x="0" y="0" transform="translate(121.4,272.8) rotate(76.4)" font-size="11.5" text-anchor="middle" dominant-baseline="central" font-family="Liberation Sans" fill="#1e1e1e" stroke="#1e1e1e" stroke-width="0.25">960</text><text x="0" y="0" transform="translate(120.8,217.7) rotate(-77.7)" font-size="11.5" text-anchor="middle" dominant-baseline="central" font-family="Liberation Sans" fill="#1e1e1e" stroke="#1e1e1e" stroke-width="0.25">970</text><text x="0" y="0" transform="translate(144.4,167.9) rotate(-51.8)" font-size="11.5" text-anchor="middle" dominant-baseline="central" font-family="Liberation Sans" fill="#1e1e1e" stroke="#1e1e1e" stroke-width="0.25">980</text><text x="0" y="0" transform="translate(187.3,133.3) rotate(-25.9)" font-size="11.5" text-anchor="middle" dominant-baseline="central" font-family="Liberation Sans" fill="#1e1e1e" stroke="#1e1e1e" stroke-width="0.25">990</text><text x="0" y="0" transform="translate(241.0,121.0) rotate(0.0)" font-size="11.5" text-anchor="middle" dominant-baseline="central" font-family="Liberation Sans" fill="#1e1e1e" stroke="#1e1e1e" stroke-width="0.25">1000</text><text x="0" y="0" transform="translate(294.7,133.3) rotate(25.9)" font-size="11.5" text-anchor="middle" dominant-baseline="central" font-family="Liberation Sans" fill="#1e1e1e" stroke="#1e1e1e" stroke-width="0.25">1010</text><text x="0" y="0" transform="translate(337.6,167.9) rotate(51.8)" font-size="11.5" text-anchor="middle" dominant-baseline="central" font-family="Liberation Sans" fill="#1e1e1e" stroke="#1e1e1e" stroke-width="0.25">1020</text><text x="0" y="0" transform="translate(361.2,217.7) rotate(77.7)" font-size="11.5" text-anchor="middle" dominant-baseline="central" font-family="Liberation Sans" fill="#1e1e1e" stroke="#1e1e1e" stroke-width="0.25">1030</text><text x="0" y="0" transform="translate(360.6,272.8) rotate(-76.4)" font-size="11.5" text-anchor="middle" dominant-baseline="central" font-family="Liberation Sans" fill="#1e1e1e" stroke="#1e1e1e" stroke-width="0.25">1040</text><text x="0" y="0" transform="translate(336.0,322.2) rotate(-50.6)" font-size="11.5" text-anchor="middle" dominant-baseline="central" font-family="Liberation Sans" fill="#1e1e1e" stroke="#1e1e1e" stroke-width="0.25">1050</text><text x="0" y="0" transform="translate(127.0,131.0) rotate(-45.0)" font-size="18" text-anchor="middle" dominant-baseline="central" font-family="Liberation Sans" font-weight="bold" fill="#1e1e1e">29</text><text x="0" y="0" transform="translate(347.0,125.0) rotate(45.0)" font-size="18" text-anchor="middle" dominant-baseline="central" font-family="Liberation Sans" font-weight="bold" fill="#1e1e1e">30</text><text x="0" y="0" transform="translate(131.0,358.0) rotate(45.0)" font-size="18" text-anchor="middle" dominant-baseline="central" font-family="Liberation Sans" font-weight="bold" fill="#1e1e1e">28</text><text x="0" y="0" transform="translate(355.0,353.0) rotate(-45.0)" font-size="18" text-anchor="middle" dominant-baseline="central" font-family="Liberation Sans" font-weight="bold" fill="#1e1e1e">31</text><text x="0" y="0" transform="translate(241.0,86.0) rotate(0.0)" font-size="10" text-anchor="middle" dominant-baseline="central" font-family="Liberation Sans" fill="#1e1e1e">5</text><text x="0" y="0" transform="translate(83.0,244.0) rotate(-90.0)" font-size="10" text-anchor="middle" dominant-baseline="central" font-family="Liberation Sans" fill="#1e1e1e">5</text><text x="0" y="0" transform="translate(399.0,244.0) rotate(90.0)" font-size="10" text-anchor="middle" dominant-baseline="central" font-family="Liberation Sans" fill="#1e1e1e">5</text><text x="0" y="0" transform="translate(236.0,63.0) rotate(0.0)" font-size="30" text-anchor="middle" dominant-baseline="central" font-family="Liberation Serif" font-weight="bold" fill="#1c2228" stroke="#1c2228" stroke-width="0.7" letter-spacing="1">Change</text><text x="0" y="0" transform="translate(85.0,157.0) rotate(-50.0)" font-size="32" text-anchor="middle" dominant-baseline="central" font-family="Liberation Serif" font-weight="bold" fill="#1c2228" stroke="#1c2228" stroke-width="0.7">Rain</text><text x="0" y="0" transform="translate(387.0,149.0) rotate(42.0)" font-size="33" text-anchor="middle" dominant-baseline="central" font-family="Liberation Serif" font-weight="bold" fill="#1c2228" stroke="#1c2228" stroke-width="0.7">Fair</text><text x="0" y="0" transform="translate(83.5,310.0) rotate(65.0)" font-size="32" text-anchor="middle" dominant-baseline="central" font-family="Liberation Serif" font-weight="bold" fill="#1c2228" stroke="#1c2228" stroke-width="0.7">Stormy</text><text x="0" y="0" transform="translate(401.0,297.0) rotate(-62.0)" font-size="31" text-anchor="middle" dominant-baseline="central" font-family="Liberation Serif" font-weight="bold" fill="#1c2228" stroke="#1c2228" stroke-width="0.7">Very Dry</text><text x="0" y="0" transform="translate(244.0,379.5) rotate(0.0)" font-size="13" text-anchor="middle" dominant-baseline="central" font-family="Liberation Serif" fill="#222">Shortland Bowen</text><path id="arcB" d="M120.16 386.02 A188 188 0 0 0 361.84 386.02" fill="none"/><text font-family="Liberation Sans" font-weight="bold" font-size="12" fill="#1e1e1e" letter-spacing="0.8" text-anchor="middle"><textPath href="#arcB" startOffset="51.8%">BAROMETER</textPath></text><path id="arcL" d="M142.23 228.36 A100 100 0 0 1 232.28 144.38" fill="none"/><path id="arcR" d="M268.56 147.87 A100 100 0 0 1 305.28 167.40" fill="none"/><path id="arcR2" d="M307.69 174.94 A96 96 0 0 1 335.54 227.33" fill="none"/><text font-family="Liberation Sans" font-size="9.5" fill="#222"><textPath href="#arcL">FALLING - DETERIORATING</textPath></text><text font-family="Liberation Sans" font-size="9" fill="#222"><textPath href="#arcR">RISING</textPath></text><text font-family="Liberation Sans" font-size="9.5" fill="#222"><textPath href="#arcR2">IMPROVING</textPath></text><path d="M219 141 Q240 133 259 139" fill="none" stroke="#222" stroke-width="1.2"/><path d="M213 142 l9 -5 l0 8 z" fill="#222"/><path d="M266 140 l-9 -5 l0 8 z" fill="#222"/><text x="0" y="0" font-size="10" font-family="Liberation Sans" fill="#222" transform="translate(144,319) rotate(42)">950<tspan font-size="7"> Millibars</tspan></text><clipPath id="mc"><circle cx="241" cy="243" r="58.5"/></clipPath><g clip-path="url(#mc)"><circle cx="241" cy="243" r="59" fill="#4a4a4a"/><circle cx="241" cy="243" r="51" fill="none" stroke="#858585" stroke-width="9"/><circle cx="241" cy="243" r="45" fill="#333"/><path d="M210 275 A33 33 0 0 1 238 210" fill="none" stroke="#b9b9b9" stroke-width="9"/><path d="M180 266 L230 250 L233 310 L195 310 Z" fill="#cfcfcf"/><path d="M182 266 l4 -3 l2 4 l4 -3 l2 4 l4 -3 l2 4 l4 -3 l2 4 l4 -3 l2 4 l4 -3 l2 4 l4 -3 l2 3" fill="none" stroke="#9a9a9a" stroke-width="1"/><path d="M256 248 L274 250 L273 310 L256 310 Z" fill="#c8c8c8"/><path d="M276 258 L300 232 L300 290 L280 305 Z" fill="#3c3c3c"/><path d="M288 232 L294 228 L282 290 L278 292 Z" fill="#9d9d9d"/><path d="M225 180 L259 180 L257 310 L228 310 Z" fill="#c6a752"/><path d="M262 186 L304 220 L296 244 L262 226 Z" fill="#b6984a"/></g><circle cx="241" cy="243" r="58.5" fill="none" stroke="#666" stroke-width="1.2"/></g><path d="M185 102 L190.5 100 L244 236 L238 239 Z" fill="#eac65c"/><path d="M193 302 L333 126" stroke="#111" stroke-width="4" fill="none"/><path d="M325 137 L304 152 L318 162 Z" fill="#111"/><mask id="cres"><rect x="0" y="0" width="480" height="480" fill="#fff"/><circle cx="179" cy="319" r="12" fill="#000"/></mask><circle cx="186" cy="311" r="13" fill="#111" mask="url(#cres)"/><polygon points="240.50,221.90 241.89,223.66 243.56,222.17 244.62,224.14 246.52,222.96 247.22,225.09 249.30,224.26 249.62,226.48 251.81,226.02 251.74,228.26 253.98,228.19 253.52,230.38 255.74,230.70 254.91,232.78 257.04,233.48 255.86,235.38 257.83,236.44 256.34,238.11 258.10,239.50 256.34,240.89 257.83,242.56 255.86,243.62 257.04,245.52 254.91,246.22 255.74,248.30 253.52,248.62 253.98,250.81 251.74,250.74 251.81,252.98 249.62,252.52 249.30,254.74 247.22,253.91 246.52,256.04 244.62,254.86 243.56,256.83 241.89,255.34 240.50,257.10 239.11,255.34 237.44,256.83 236.38,254.86 234.48,256.04 233.78,253.91 231.70,254.74 231.38,252.52 229.19,252.98 229.26,250.74 227.02,250.81 227.48,248.62 225.26,248.30 226.09,246.22 223.96,245.52 225.14,243.62 223.17,242.56 224.66,240.89 222.90,239.50 224.66,238.11 223.17,236.44 225.14,235.38 223.96,233.48 226.09,232.78 225.26,230.70 227.48,230.38 227.02,228.19 229.26,228.26 229.19,226.02 231.38,226.48 231.70,224.26 233.78,225.09 234.48,222.96 236.38,224.14 237.44,222.17 239.11,223.66" fill="url(#gear)"/></svg>
<div class="ab" style="left:1075px;top:449px;width:76px;height:76px;background:transparent;border:1.5px solid #4b93dc"></div>
<div class="ab" style="left:628px;top:832px;width:125px;height:40px;background:#424242;border-radius:15px 15px 0 0"></div>
<div class="ab" style="left:753px;top:832px;width:124px;height:37px;background:#252525;border-radius:15px 15px 0 0"></div>
<div class="ab" style="left:878px;top:832px;width:124px;height:37px;background:#252525;border-radius:15px 15px 0 0"></div>
<div class="t" style="left:628px;top:843.61px;font-size:17px;color:#dcdcdc;width:125px;text-align:center;">Assets</div>
<div class="t" style="left:753px;top:843.61px;font-size:17px;color:#7c7c7c;width:124px;text-align:center;">Console</div>
<div class="t" style="left:878px;top:843.61px;font-size:17px;color:#7c7c7c;width:124px;text-align:center;">Errors</div>
<div class="ab" style="left:628px;top:869px;width:977px;height:120px;background:#424242;"></div>
<div class="ab" style="left:1592px;top:871px;width:11px;height:104px;background:#4a4a4a;border-radius:6px"></div>
<svg style="left:717px;top:892px;" width="22" height="22" viewBox="0 0 22 22"><circle cx="11" cy="11" r="11" fill="#2c2c2c"/><path d="M7.5 7.5 L14.5 14.5 M14.5 7.5 L7.5 14.5" stroke="#fff" stroke-width="2.4" stroke-linecap="round"/></svg>
<svg style="left:822px;top:892px;" width="22" height="22" viewBox="0 0 22 22"><circle cx="11" cy="11" r="11" fill="#2c2c2c"/><path d="M7.5 7.5 L14.5 14.5 M14.5 7.5 L7.5 14.5" stroke="#fff" stroke-width="2.4" stroke-linecap="round"/></svg>
<svg style="left:927px;top:892px;" width="22" height="22" viewBox="0 0 22 22"><circle cx="11" cy="11" r="11" fill="#2c2c2c"/><path d="M7.5 7.5 L14.5 14.5 M14.5 7.5 L7.5 14.5" stroke="#fff" stroke-width="2.4" stroke-linecap="round"/></svg>
<svg style="left:1032px;top:892px;" width="22" height="22" viewBox="0 0 22 22"><circle cx="11" cy="11" r="11" fill="#2c2c2c"/><path d="M7.5 7.5 L14.5 14.5 M14.5 7.5 L7.5 14.5" stroke="#fff" stroke-width="2.4" stroke-linecap="round"/></svg>
<svg style="left:663px;top:905px;" width="64" height="64" viewBox="0 0 64 64"><use href="#baro" transform="translate(-1.707,-1.707) scale(0.14044)"/></svg>
<div class="t" style="left:635px;top:970.30px;font-size:15px;color:#c8c8c8;width:120px;text-align:center;">Background.p</div>
<svg style="left:770px;top:910px;" width="55" height="55" viewBox="0 0 55 55"><path d="M7 53 L49.5 1" stroke="#262626" stroke-width="1.9"/><circle cx="21.5" cy="34.5" r="3" fill="#444" stroke="#262626" stroke-width="1.6"/><path d="M47 4 L41 9 L44.5 12 Z" fill="#262626"/><path d="M3 50 Q8 47 10 55" stroke="#262626" stroke-width="1.8" fill="none"/></svg>
<div class="t" style="left:740px;top:978.30px;font-size:15px;color:#c8c8c8;width:120px;text-align:center;">Black.png</div>
<svg style="left:890px;top:905px;" width="36" height="60" viewBox="0 0 36 60"><path d="M4 2 L21.5 47" stroke="#e8c45a" stroke-width="1.7"/><circle cx="24.5" cy="52.5" r="5.4" fill="none" stroke="#e8c45a" stroke-width="1.6"/></svg>
<div class="t" style="left:845px;top:978.30px;font-size:15px;color:#c8c8c8;width:120px;text-align:center;">Gold.png</div>
<svg style="left:990px;top:918px;" width="40" height="40" viewBox="0 0 40 40"><defs><radialGradient id="g2" cx="45%" cy="40%" r="60%"><stop offset="0" stop-color="#f4d46e"/><stop offset="1" stop-color="#d9ab3c"/></radialGradient></defs><polygon points="20.00,1.20 21.22,2.95 22.71,1.41 23.64,3.33 25.35,2.05 25.97,4.09 27.85,3.09 28.15,5.20 30.17,4.50 30.13,6.64 32.23,6.27 31.86,8.37 34.00,8.33 33.30,10.35 35.41,10.65 34.41,12.53 36.45,13.15 35.17,14.86 37.09,15.79 35.55,17.28 37.30,18.50 35.55,19.72 37.09,21.21 35.17,22.14 36.45,23.85 34.41,24.47 35.41,26.35 33.30,26.65 34.00,28.67 31.86,28.63 32.23,30.73 30.13,30.36 30.17,32.50 28.15,31.80 27.85,33.91 25.97,32.91 25.35,34.95 23.64,33.67 22.71,35.59 21.22,34.05 20.00,35.80 18.78,34.05 17.29,35.59 16.36,33.67 14.65,34.95 14.03,32.91 12.15,33.91 11.85,31.80 9.83,32.50 9.87,30.36 7.77,30.73 8.14,28.63 6.00,28.67 6.70,26.65 4.59,26.35 5.59,24.47 3.55,23.85 4.83,22.14 2.91,21.21 4.45,19.72 2.70,18.50 4.45,17.28 2.91,15.79 4.83,14.86 3.55,13.15 5.59,12.53 4.59,10.65 6.70,10.35 6.00,8.33 8.14,8.37 7.77,6.27 9.87,6.64 9.83,4.50 11.85,5.20 12.15,3.09 14.03,4.09 14.65,2.05 16.36,3.33 17.29,1.41 18.78,2.95" fill="url(#g2)"/></svg>
<div class="ab" style="left:628px;top:985px;width:977px;height:4px;background:#424242;"></div>
<div class="t" style="left:950px;top:978.30px;font-size:15px;color:#c8c8c8;width:120px;text-align:center;">Center.png</div>
<div class="ab" style="left:628px;top:989px;width:977px;height:40px;background:#2a2a2a;"></div>
<div class="t" style="left:634px;top:1002.15px;font-size:14px;color:#f0f0f0;font-weight:bold;letter-spacing:-0.25px">Copy your images into the assets folder in your project folder</div>
<div class="ab" style="left:1411px;top:995px;width:186px;height:29px;background:#2ea043;border-radius:15px;border:1.5px solid #3fc25a"></div>
<div class="t" style="left:1411px;top:1003.30px;font-size:15px;color:#f4f4f4;font-weight:bold;width:186px;text-align:center;letter-spacing:-0.55px">ADD FILE INTO ASSETS</div>
<div class="ab" style="left:1610px;top:76px;width:309px;height:953px;background:#393939;"></div>
<div class="ab" style="left:1610px;top:76px;width:309px;height:42px;background:#1b1b1b;"></div>
<div class="ab" style="left:1918px;top:76px;width:1px;height:955px;background:#1b1b1b;"></div>
<div class="ab" style="left:1919px;top:76px;width:1px;height:955px;background:#4e4e4e;"></div>
<div class="ab" style="left:1611px;top:80px;width:62px;height:40px;background:#424242;border-radius:15px 15px 0 0"></div>
<div class="ab" style="left:1673px;top:80px;width:60px;height:38px;background:#242424;border-radius:15px 15px 0 0"></div>
<div class="ab" style="left:1735px;top:80px;width:60px;height:38px;background:#242424;border-radius:15px 15px 0 0"></div>
<div class="ab" style="left:1797px;top:80px;width:59px;height:38px;background:#242424;border-radius:15px 15px 0 0"></div>
<div class="ab" style="left:1858px;top:80px;width:60px;height:38px;background:#242424;border-radius:15px 15px 0 0"></div>
<div class="t" style="left:1616px;top:90.61px;font-size:17px;color:#e0e0e0;">Inspec</div>
<div class="t" style="left:1678px;top:90.61px;font-size:17px;color:#7a7a7a;">Histor</div>
<div class="t" style="left:1747px;top:90.61px;font-size:17px;color:#7a7a7a;">Font</div>
<div class="t" style="left:1798px;top:90.61px;font-size:17px;color:#7a7a7a;">Animat</div>
<div class="t" style="left:1861px;top:90.61px;font-size:17px;color:#7a7a7a;">Theme</div>
<div class="ab" style="left:1610px;top:118px;width:309px;height:7px;background:#424242;"></div>
<div class="ab" style="left:1634px;top:120px;width:260px;height:27px;background:#525252;border-radius:0 0 6px 6px"></div>
<div class="t" style="left:1645px;top:126.30px;font-size:15px;color:#f4f4f4;font-weight:bold;letter-spacing:-0.9px">CENTER</div>
<svg style="left:1871px;top:128px;" width="12" height="10" viewBox="0 0 12 10"><path d="M0 0 H11 L5.5 9.5 Z" fill="#f4f4f4"/></svg>
<div class="ab" style="left:1610px;top:118px;width:309px;height:7px;background:#424242;"></div>
<svg style="left:1638px;top:163px;" width="9" height="10" viewBox="0 0 9 10"><path d="M0 0 V9.5 L8 4.75 Z" fill="#cfcfcf"/></svg>
<div class="t" style="left:1653px;top:159.96px;font-size:16px;color:#cfcfcf;font-weight:bold;letter-spacing:-0.8px">Flags</div>
<svg style="left:1638px;top:193px;" width="9" height="10" viewBox="0 0 9 10"><path d="M0 0 V9.5 L8 4.75 Z" fill="#cfcfcf"/></svg>
<div class="t" style="left:1653px;top:189.96px;font-size:16px;color:#cfcfcf;font-weight:bold;letter-spacing:-0.2px">Scrolling</div>
<svg style="left:1638px;top:223px;" width="9" height="10" viewBox="0 0 9 10"><path d="M0 0 V9.5 L8 4.75 Z" fill="#cfcfcf"/></svg>
<div class="t" style="left:1653px;top:219.96px;font-size:16px;color:#cfcfcf;font-weight:bold;letter-spacing:-0.2px">States</div>
<svg style="left:1637px;top:254px;" width="10" height="9" viewBox="0 0 10 9"><path d="M0 0 H9 L4.5 8 Z" fill="#cfcfcf"/></svg>
<div class="t" style="left:1653px;top:249.96px;font-size:16px;color:#cfcfcf;font-weight:bold;letter-spacing:-0.2px">Image</div>
<div class="ab" style="left:1697px;top:168px;width:198px;height:2px;background:#7d7d7d;"></div>
<div class="ab" style="left:1723px;top:197px;width:172px;height:2px;background:#7d7d7d;"></div>
<div class="ab" style="left:1705px;top:227px;width:190px;height:2px;background:#7d7d7d;"></div>
<div class="ab" style="left:1705px;top:257px;width:190px;height:2px;background:#7d7d7d;"></div>
<div class="t" style="left:1633px;top:276.30px;font-size:15px;color:#c8c8c8;">Asset</div>
<div class="ab" style="left:1634px;top:299px;width:260px;height:28px;background:#525252;border-radius:6px"></div>
<div class="t" style="left:1645px;top:305.80px;font-size:15px;color:#f4f4f4;font-weight:bold;letter-spacing:0.6px">Center.png</div>
<svg style="left:1871px;top:308.0px;" width="12" height="10" viewBox="0 0 12 10"><path d="M0 0 H11 L5.5 9.5 Z" fill="#f4f4f4"/></svg>
<div class="t" style="left:1635px;top:339.15px;font-size:14px;color:#9a9a9a;letter-spacing:0.6px">assets/Center.png</div>
<div class="t" style="left:1635px;top:359.15px;font-size:14px;color:#9a9a9a;letter-spacing:0.4px">w: 70&nbsp;&nbsp; h: 70</div>
<svg style="left:1708px;top:461px;shape-rendering:crispEdges" width="110" height="108" viewBox="0 0 110 108"><defs><radialGradient id="g3" cx="45%" cy="40%" r="60%"><stop offset="0" stop-color="#f2d672"/><stop offset="0.8" stop-color="#e6c258"/><stop offset="1" stop-color="#c99f3c"/></radialGradient></defs><polygon points="55.00,1.00 58.77,6.15 63.29,1.65 66.21,7.33 71.38,3.59 73.37,9.65 79.06,6.78 80.08,13.07 86.15,11.12 86.17,17.50 92.48,16.52 91.50,22.83 97.88,22.85 95.93,28.92 102.22,29.94 99.35,35.63 105.41,37.62 101.67,42.79 107.35,45.71 102.85,50.23 108.00,54.00 102.85,57.77 107.35,62.29 101.67,65.21 105.41,70.38 99.35,72.37 102.22,78.06 95.93,79.08 97.88,85.15 91.50,85.17 92.48,91.48 86.17,90.50 86.15,96.88 80.08,94.93 79.06,101.22 73.37,98.35 71.38,104.41 66.21,100.67 63.29,106.35 58.77,101.85 55.00,107.00 51.23,101.85 46.71,106.35 43.79,100.67 38.62,104.41 36.63,98.35 30.94,101.22 29.92,94.93 23.85,96.88 23.83,90.50 17.52,91.48 18.50,85.17 12.12,85.15 14.07,79.08 7.78,78.06 10.65,72.37 4.59,70.38 8.33,65.21 2.65,62.29 7.15,57.77 2.00,54.00 7.15,50.23 2.65,45.71 8.33,42.79 4.59,37.62 10.65,35.63 7.78,29.94 14.07,28.92 12.12,22.85 18.50,22.83 17.52,16.52 23.83,17.50 23.85,11.12 29.92,13.07 30.94,6.78 36.63,9.65 38.62,3.59 43.79,7.33 46.71,1.65 51.23,6.15" fill="url(#g3)"/></svg>
<div class="ab" style="left:1906px;top:358px;width:10px;height:477px;background:#4a4a4a;border-radius:5px"></div>
<div class="t" style="left:1632px;top:651.30px;font-size:15px;color:#c8c8c8;">Pivot X</div>
<div class="t" style="left:1767px;top:651.30px;font-size:15px;color:#c8c8c8;">Pivot Y</div>
<div class="ab" style="left:1634px;top:672px;width:125px;height:28px;background:#525252;border-radius:6px"></div>
<div class="t" style="left:1634px;top:678.80px;font-size:15px;color:#f4f4f4;font-weight:bold;width:114px;text-align:right;">0</div>
<div class="ab" style="left:1769px;top:672px;width:125px;height:28px;background:#525252;border-radius:6px"></div>
<div class="t" style="left:1769px;top:678.80px;font-size:15px;color:#f4f4f4;font-weight:bold;width:114px;text-align:right;">0</div>
<div class="t" style="left:1633px;top:711.30px;font-size:15px;color:#c8c8c8;">Rotation</div>
<div class="ab" style="left:1634px;top:732px;width:260px;height:28px;background:#525252;border-radius:6px"></div>
<div class="t" style="left:1634px;top:738.80px;font-size:15px;color:#f4f4f4;font-weight:bold;width:249px;text-align:right;">0</div>
<div class="t" style="left:1633px;top:771.30px;font-size:15px;color:#c8c8c8;">Scale</div>
<div class="ab" style="left:1634px;top:791px;width:260px;height:28px;background:#525252;border-radius:6px"></div>
<div class="t" style="left:1634px;top:797.80px;font-size:15px;color:#f4f4f4;font-weight:bold;width:249px;text-align:right;">256</div>
<div class="ab" style="left:1610px;top:843px;width:309px;height:2px;background:#444444;"></div>
<div class="ab" style="left:1610px;top:845px;width:308px;height:29px;background:#2e2e2e;"></div>
<svg style="left:1617px;top:856px;" width="10" height="9" viewBox="0 0 10 9"><path d="M0 0 H9 L4.5 8 Z" fill="#f2f2f2"/></svg>
<div class="t" style="left:1632px;top:854.30px;font-size:15px;color:#f2f2f2;font-weight:bold;letter-spacing:-0.85px">STYLE SETTINGS</div>
<div class="t" style="left:1633px;top:893.30px;font-size:15px;color:#a8a8a8;letter-spacing:-1px">STATE</div>
<div class="ab" style="left:1634px;top:914px;width:260px;height:28px;background:#525252;border-radius:6px"></div>
<div class="t" style="left:1645px;top:920.80px;font-size:15px;color:#f4f4f4;font-weight:bold;letter-spacing:-0.6px">DEFAULT</div>
<svg style="left:1871px;top:923.0px;" width="12" height="10" viewBox="0 0 12 10"><path d="M0 0 H11 L5.5 9.5 Z" fill="#f4f4f4"/></svg>
<div class="ab" style="left:1633px;top:964px;width:262px;height:65px;background:#3e3e3e;"></div>
<svg style="left:1638px;top:975px;" width="10" height="9" viewBox="0 0 10 9"><path d="M0 0 H9 L4.5 8 Z" fill="#f2f2f2"/></svg>
<div class="t" style="left:1655px;top:973.30px;font-size:15px;color:#f2f2f2;font-weight:bold;letter-spacing:-0.35px">STYLE (MAIN)</div>
<svg style="left:1675px;top:1010px;" width="9" height="10" viewBox="0 0 9 10"><path d="M0 0 V9.5 L8 4.75 Z" fill="#bdbdbd"/></svg>
<div class="t" style="left:1690px;top:1007.46px;font-size:16px;color:#bdbdbd;font-weight:bold;letter-spacing:-0.2px">Background</div>
<div class="ab" style="left:1785px;top:1014px;width:73px;height:1.5px;background:#7a7a7a;"></div>
<div class="ab" style="left:0px;top:1029px;width:1920px;height:3px;background:#1b1b1b;"></div>
<div class="ab" style="left:0;top:1032px;width:1920px;height:48px;background:linear-gradient(90deg,#e0eaf6 0%,#dbe5f5 20%,#d6e2f7 38%,#d9e0f3 55%,#d8ddee 70%,#d6e0f6 85%,#dfe7f5 100%)"></div>
<svg style="left:21px;top:1045px;" width="24" height="24" viewBox="0 0 24 24"><defs><linearGradient id="wg" x1="0" y1="0" x2="1" y2="1"><stop offset="0" stop-color="#3cc8f8"/><stop offset="1" stop-color="#0a78d8"/></linearGradient></defs><rect x="0" y="0" width="11" height="11" fill="url(#wg)"/><rect x="12.5" y="0" width="11" height="11" fill="url(#wg)"/><rect x="0" y="12.5" width="11" height="11" fill="url(#wg)"/><rect x="12.5" y="12.5" width="11" height="11" fill="url(#wg)"/></svg>
<div class="ab" style="left:58px;top:1041px;width:218px;height:31px;background:#f6f8fc;border-radius:16px;border:1px solid #d3d9e4"></div>
<svg style="left:68px;top:1047px;" width="18" height="18" viewBox="0 0 18 18"><circle cx="7" cy="7" r="5.5" fill="none" stroke="#222" stroke-width="1.6"/><path d="M11 11 L15.5 15.5" stroke="#222" stroke-width="1.8" stroke-linecap="round"/></svg>
<div class="t" style="left:94px;top:1050.15px;font-size:14px;color:#5a5a5a;">Search</div>
<svg style="left:222px;top:1043px;" width="54" height="28" viewBox="0 0 54 28"><g stroke="#8d7cc9" stroke-width="1.3" stroke-linecap="round"><path d="M2.5 17 L25 12 M3 22 L25 13 M5 25 L26 14 M8 26 L26.5 15"/></g><path d="M24 13 L33 5.5" stroke="#5e4ea0" stroke-width="3.2"/><path d="M28 10 L36 4" stroke="#e4dcee" stroke-width="2.6"/><g transform="rotate(20 38 19)"><rect x="28" y="15.5" width="19" height="7.5" rx="1.5" fill="#dea43c"/><rect x="34" y="16.5" width="5" height="5" fill="#f3d7d0"/></g><g fill="#bdb98a"><circle cx="4" cy="8" r="1.1"/><circle cx="32" cy="19.5" r="1.1"/><circle cx="46" cy="7" r="1.1"/><circle cx="45" cy="14" r="1.1"/><circle cx="7.5" cy="26" r="1.1"/></g><g fill="#9d9ab8"><circle cx="9" cy="7" r="1.1"/><circle cx="34.5" cy="22" r="1.1"/><circle cx="40" cy="13" r="1.1"/><circle cx="32" cy="25" r="1"/></g></svg>
<svg style="left:289px;top:1044px;" width="25" height="24" viewBox="0 0 25 24"><rect x="6" y="0" width="19" height="17" rx="1.5" fill="#f4f4f4" stroke="#e0e0e0"/><rect x="0" y="7" width="18" height="16" rx="1" fill="#2a2a2a"/><rect x="6" y="7" width="12" height="10" fill="#bdbdbd"/></svg>
<svg style="left:336px;top:1044px;" width="19" height="24" viewBox="0 0 19 24"><rect x="0" y="0" width="19" height="24" rx="1.5" fill="#6c7480"/><rect x="2" y="2" width="15" height="4" fill="#58d0f0"/><g fill="#d8dce2"><rect x="2" y="9" width="4" height="3.5"/><rect x="7.5" y="9" width="4" height="3.5"/><rect x="13" y="9" width="4" height="3.5"/><rect x="2" y="14" width="4" height="3.5"/><rect x="7.5" y="14" width="4" height="3.5"/><rect x="2" y="19" width="4" height="3.5"/><rect x="7.5" y="19" width="4" height="3.5"/></g><rect x="13" y="14" width="4" height="8.5" fill="#1a3f8a"/></svg>
<svg style="left:376px;top:1043px;" width="26" height="26" viewBox="0 0 26 26"><circle cx="13" cy="13" r="12.5" fill="#e8453c"/><path d="M13 13 L2.2 19.2 A12.5 12.5 0 0 0 19.2 23.8 Z" fill="#2ba24c"/><path d="M13 13 L19.2 23.8 A12.5 12.5 0 0 0 13 0.5 L13 13 Z" fill="#f6c026"/><path d="M13 13 L13 0.5 A12.5 12.5 0 0 0 2.2 19.2 Z" fill="#2ba24c" opacity="0"/><circle cx="13" cy="13" r="5.6" fill="#fff"/><circle cx="13" cy="13" r="4.4" fill="#3b78e7"/></svg>
<svg style="left:421px;top:1045px;" width="24" height="22" viewBox="0 0 24 22"><path d="M0 2 A2 2 0 0 1 2 0 H8 L10 2.5 H22 A2 2 0 0 1 24 4.5 V20 A2 2 0 0 1 22 22 H2 A2 2 0 0 1 0 20 Z" fill="#f6c84a"/><path d="M0 4 H24" stroke="#e0a820" stroke-width="1"/><rect x="4.5" y="13" width="15" height="9" rx="2" fill="#1a7ad8"/></svg>
<div class="ab" style="left:385px;top:1072px;width:8px;height:3px;background:#6b6f78;border-radius:2px"></div>
<div class="ab" style="left:429px;top:1072px;width:8px;height:3px;background:#6b6f78;border-radius:2px"></div>
<div class="ab" style="left:458px;top:1037px;width:38px;height:38px;background:#f2f5fb;border-radius:5px;border:1px solid #e4e9f2"></div>
<svg style="left:466px;top:1044px;" width="22" height="22" viewBox="0 0 22 22"><rect x="1" y="1" width="20" height="20" rx="3" fill="#f9f9f9" stroke="#e6e6e6" stroke-width="0.8"/><use href="#logo" transform="translate(11,11) scale(0.46)"/></svg>
<div class="ab" style="left:470px;top:1072px;width:15px;height:3px;background:#0b67c2;border-radius:2px"></div>
<svg style="left:1714px;top:1052px;" width="11" height="7" viewBox="0 0 11 7"><path d="M0.5 6 L5.5 1 L10.5 6" fill="none" stroke="#222" stroke-width="1.3"/></svg>
<div class="t" style="left:1745.5px;top:1051.69px;font-size:11px;color:#1f1f1f;letter-spacing:0.1px">ENG</div>
<svg style="left:1787px;top:1048px;" width="16" height="16" viewBox="0 0 16 16"><rect x="0.6" y="1" width="11" height="9.5" fill="none" stroke="#222" stroke-width="1.1"/><path d="M4 14 H10 M6 10.5 V14" stroke="#222" stroke-width="1.1"/><rect x="10.5" y="0.6" width="4" height="5" rx="1.5" fill="#fff" stroke="#222" stroke-width="1"/><path d="M12.5 5.5 V15.5" stroke="#222" stroke-width="1.1"/></svg>
<svg style="left:1811px;top:1049px;" width="17" height="15" viewBox="0 0 17 15"><path d="M1 5 H4 L8 1.5 V13.5 L4 10 H1 Z" fill="none" stroke="#222" stroke-width="1.1"/><path d="M10.5 5 Q12 7.5 10.5 10 M12.5 3 Q15 7.5 12.5 12 M14.5 1.5 Q17.5 7.5 14.5 13.5" fill="none" stroke="#222" stroke-width="1.1"/></svg>
<div class="t" style="left:1830px;top:1042.69px;font-size:11px;color:#1f1f1f;width:70px;text-align:right;">09:01</div>
<div class="t" style="left:1830px;top:1058.69px;font-size:11px;color:#1f1f1f;width:70px;text-align:right;">31.12.2025</div>
</body></html>
